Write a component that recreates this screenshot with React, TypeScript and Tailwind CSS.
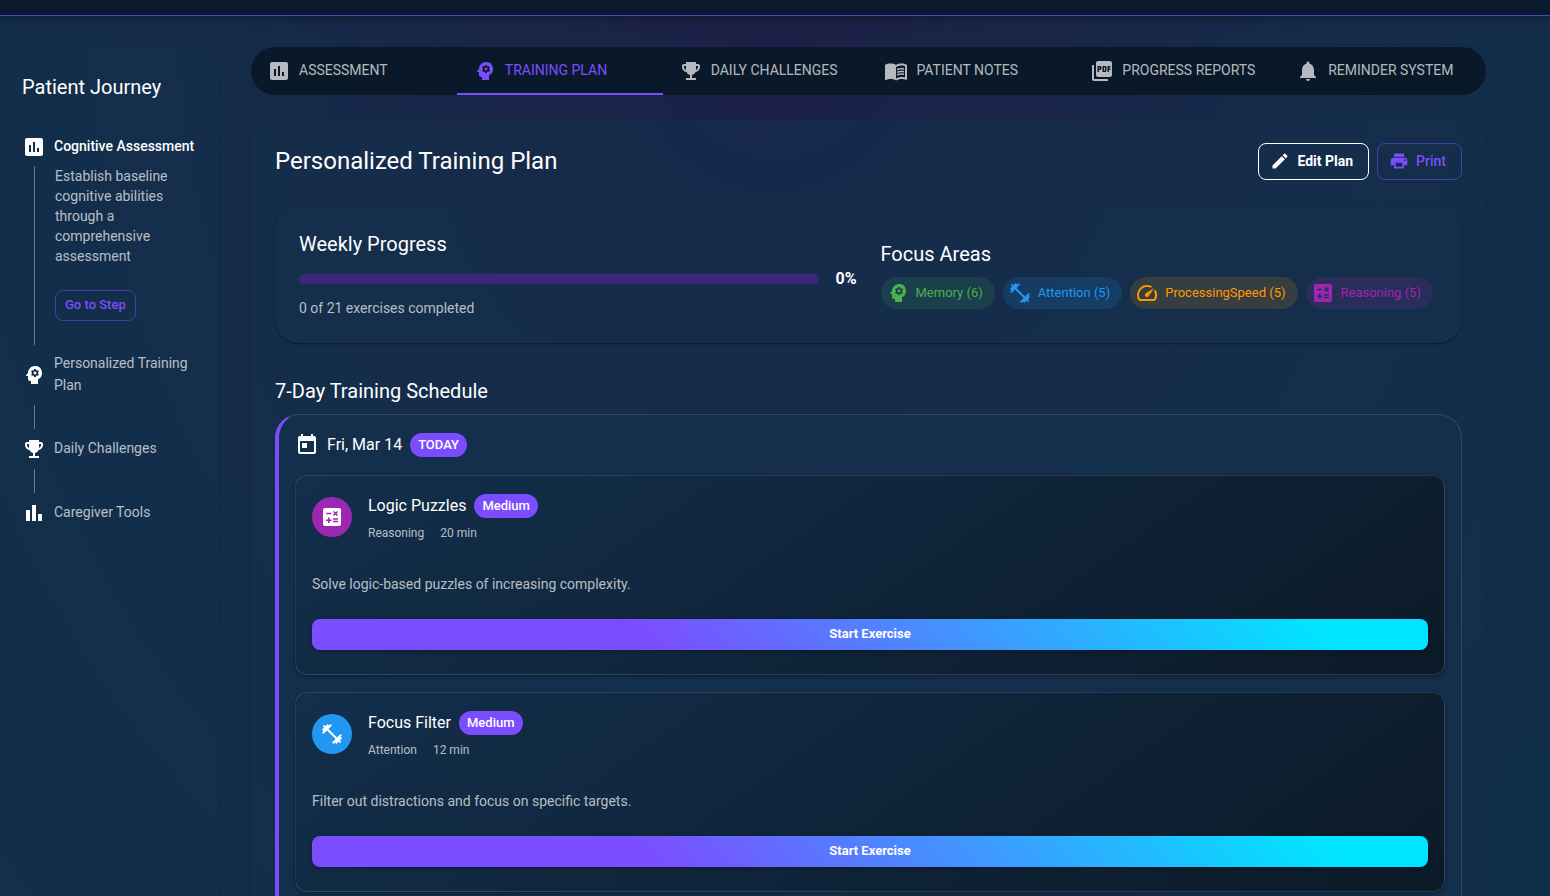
import type { ReactNode } from "react";
import type { IconType } from "react-icons";
import {
  MdAssessment,
  MdBarChart,
  MdCalculate,
  MdEdit,
  MdEmojiEvents,
  MdFitnessCenter,
  MdMenuBook,
  MdNotifications,
  MdPictureAsPdf,
  MdPrint,
  MdPsychology,
  MdSpeed,
  MdToday,
} from "react-icons/md";

const tabs: { label: string; icon: IconType; active?: boolean }[] = [
  { label: "Assessment", icon: MdAssessment },
  { label: "Training Plan", icon: MdPsychology, active: true },
  { label: "Daily Challenges", icon: MdEmojiEvents },
  { label: "Patient Notes", icon: MdMenuBook },
  { label: "Progress Reports", icon: MdPictureAsPdf },
  { label: "Reminder System", icon: MdNotifications },
];

const focusAreas: { label: string; icon: IconType; tone: string }[] = [
  { label: "Memory (6)", icon: MdPsychology, tone: "bg-[#4caf50]/15 text-[#4caf50]" },
  { label: "Attention (5)", icon: MdFitnessCenter, tone: "bg-[#2196f3]/15 text-[#2196f3]" },
  { label: "ProcessingSpeed (5)", icon: MdSpeed, tone: "bg-[#ff9800]/15 text-[#ff9800]" },
  { label: "Reasoning (5)", icon: MdCalculate, tone: "bg-[#9c27b0]/15 text-[#9c27b0]" },
];

const exercises: {
  title: string;
  area: string;
  time: string;
  text: string;
  icon: IconType;
  tone: string;
}[] = [
  {
    title: "Logic Puzzles",
    area: "Reasoning",
    time: "20 min",
    text: "Solve logic-based puzzles of increasing complexity.",
    icon: MdCalculate,
    tone: "bg-[#9c27b0]",
  },
  {
    title: "Focus Filter",
    area: "Attention",
    time: "12 min",
    text: "Filter out distractions and focus on specific targets.",
    icon: MdFitnessCenter,
    tone: "bg-[#2196f3]",
  },
];

function Badge({ children }: { children: ReactNode }) {
  return (
    <span className="flex h-6 items-center rounded-full bg-[#7c4dff] px-2 text-[13px] font-medium">
      {children}
    </span>
  );
}

function StepLabel({ icon: Icon, label, active }: { icon: IconType; label: string; active?: boolean }) {
  return (
    <div className="flex items-center gap-2 py-2">
      <Icon className="size-6 shrink-0" />
      <span
        className={
          active ? "-mt-px mb-px text-sm/[22px] font-medium" : "-mt-px mb-px text-sm/[22px] text-white/70"
        }
      >
        {label}
      </span>
    </div>
  );
}

function Connector() {
  return <div className="ml-3 h-6 border-l border-[#757575]" />;
}

function Sidebar() {
  return (
    <aside className="w-[219px] shrink-0 rounded-3xl bg-[#132f4c]/50 px-[22px] py-6 shadow-[0_1px_3px_rgba(0,0,0,0.12)]">
      <h2 className="mb-6 text-xl/8">Patient Journey</h2>
      <StepLabel icon={MdAssessment} label="Cognitive Assessment" active />
      <div className="ml-3 border-l border-[#757575] pb-6 pl-5">
        <p className="-mt-px mb-px text-sm/5 text-white/70">
          Establish baseline cognitive abilities through a comprehensive assessment
        </p>
        <button
          type="button"
          className="mt-6 flex h-[31px] items-center rounded-lg border border-[#7c4dff]/50 px-[9px] pb-[2px] text-[13px] font-medium text-[#7c4dff]"
        >
          Go to Step
        </button>
      </div>
      <StepLabel icon={MdPsychology} label="Personalized Training Plan" />
      <Connector />
      <StepLabel icon={MdEmojiEvents} label="Daily Challenges" />
      <Connector />
      <StepLabel icon={MdBarChart} label="Caregiver Tools" />
    </aside>
  );
}

function TabBar() {
  return (
    <nav className="grid h-12 grid-cols-6 overflow-hidden rounded-3xl bg-[#0a1929]" role="tablist">
      {tabs.map(({ label, icon: Icon, active }) => (
        <button
          key={label}
          type="button"
          role="tab"
          aria-selected={!!active}
          className={
            active
              ? "flex items-center gap-2 pl-4 text-sm whitespace-nowrap text-[#7c4dff] uppercase shadow-[inset_0_-2px_0_#7c4dff]"
              : "flex items-center gap-2 pl-4 text-sm whitespace-nowrap text-white/70 uppercase"
          }
        >
          <Icon className="size-6 shrink-0" />
          <span className="pb-[2px]">{label}</span>
        </button>
      ))}
    </nav>
  );
}

function WeeklyProgress() {
  return (
    <section className="mt-6 grid grid-cols-2 items-center gap-6 rounded-3xl bg-[#132f4c]/50 p-6 shadow-[0_2px_1px_-1px_rgba(0,0,0,0.2),0_1px_1px_rgba(0,0,0,0.14),0_1px_3px_rgba(0,0,0,0.12)]">
      <div>
        <h3 className="text-xl/8">Weekly Progress</h3>
        <div className="mt-[7px] flex items-center gap-4">
          <div
            role="progressbar"
            aria-label="Weekly progress"
            aria-valuenow={0}
            className="h-[10px] grow rounded-[5px] bg-[#3e267f]"
          />
          <span className="text-base/6 font-bold">0%</span>
        </div>
        <p className="mt-[7px] pb-px text-sm/5 text-white/70">0 of 21 exercises completed</p>
      </div>
      <div>
        <h3 className="text-xl/8">Focus Areas</h3>
        <ul className="mt-[7px] flex gap-2">
          {focusAreas.map(({ label, icon: Icon, tone }) => (
            <li
              key={label}
              className={`flex h-8 items-center gap-[6px] rounded-full pr-3 pl-[5px] text-[13px] whitespace-nowrap ${tone}`}
            >
              <Icon className="size-6 shrink-0" />
              {label}
            </li>
          ))}
        </ul>
      </div>
    </section>
  );
}

function Exercise({ title, area, time, text, icon: Icon, tone }: (typeof exercises)[number]) {
  return (
    <article className="rounded-xl border border-white/12 bg-linear-[145deg,#132f4c,#0c1a28] px-4 pt-4 pb-6 shadow-[0_2px_4px_rgba(0,0,0,0.3)]">
      <div className="flex items-center gap-4">
        <div className={`flex size-10 items-center justify-center rounded-full ${tone}`}>
          <Icon className="size-6" />
        </div>
        <div>
          <div className="flex h-7 items-center gap-2">
            <h4 className="text-base">{title}</h4>
            <Badge>Medium</Badge>
          </div>
          <div className="mt-[3px] -mb-px flex gap-4 text-xs/5 text-white/70">
            <span>{area}</span>
            <span>{time}</span>
          </div>
        </div>
      </div>
      <p className="mt-8 text-sm/5 text-white/70">{text}</p>
      <button
        type="button"
        className="mt-[25px] h-[31px] w-full rounded-lg bg-[linear-gradient(45deg,#7c4dff_30%,#00e5ff_90%)] pb-[2px] text-[13px] font-bold shadow-[0_1px_5px_rgba(0,0,0,0.3)]"
      >
        Start Exercise
      </button>
    </article>
  );
}

export default function App() {
  return (
    <div className="min-h-screen bg-[radial-gradient(ellipse_at_50%_0%,#1d2048_0%,#152b4a_50%,#0f3048_100%)] font-[Roboto,sans-serif] text-white">
      <header className="h-4 border-b border-[#7c4dff]/70 bg-[#0a1a2e] shadow-[0_2px_8px_rgba(0,0,0,0.35)]" />
      <div className="flex gap-8 pt-[31px] pr-16">
        <Sidebar />
        <main className="min-w-0 grow">
          <TabBar />
          <div className="mt-6 rounded-3xl bg-[#132f4c]/50 p-6 shadow-[0_1px_3px_rgba(0,0,0,0.12)]">
            <div className="flex items-center justify-between">
              <h1 className="pb-[2px] text-2xl/8">Personalized Training Plan</h1>
              <div className="flex gap-2">
                <button
                  type="button"
                  className="flex h-[37px] items-center gap-[7px] rounded-lg border border-white pr-[15px] pb-[2px] pl-[11px] text-sm font-bold"
                >
                  <MdEdit className="size-5" />
                  Edit Plan
                </button>
                <button
                  type="button"
                  className="flex h-[37px] items-center gap-[7px] rounded-lg border border-[#7c4dff]/50 pr-[15px] pb-[2px] pl-[11px] text-sm font-medium text-[#7c4dff]"
                >
                  <MdPrint className="size-5" />
                  Print
                </button>
              </div>
            </div>
            <WeeklyProgress />
            <h2 className="mt-8 text-xl/8">7-Day Training Schedule</h2>
            <section className="mt-[7px] rounded-3xl border border-l-4 border-white/12 border-l-[#7c4dff] bg-[#142f4c]/80 p-4 pb-10">
              <div className="mb-4 flex h-7 items-center gap-2">
                <MdToday className="size-6" />
                <h3 className="text-base">Fri, Mar 14</h3>
                <Badge>TODAY</Badge>
              </div>
              <div className="flex flex-col gap-[17px]">
                {exercises.map((exercise) => (
                  <Exercise key={exercise.title} {...exercise} />
                ))}
              </div>
            </section>
          </div>
        </main>
      </div>
    </div>
  );
}
